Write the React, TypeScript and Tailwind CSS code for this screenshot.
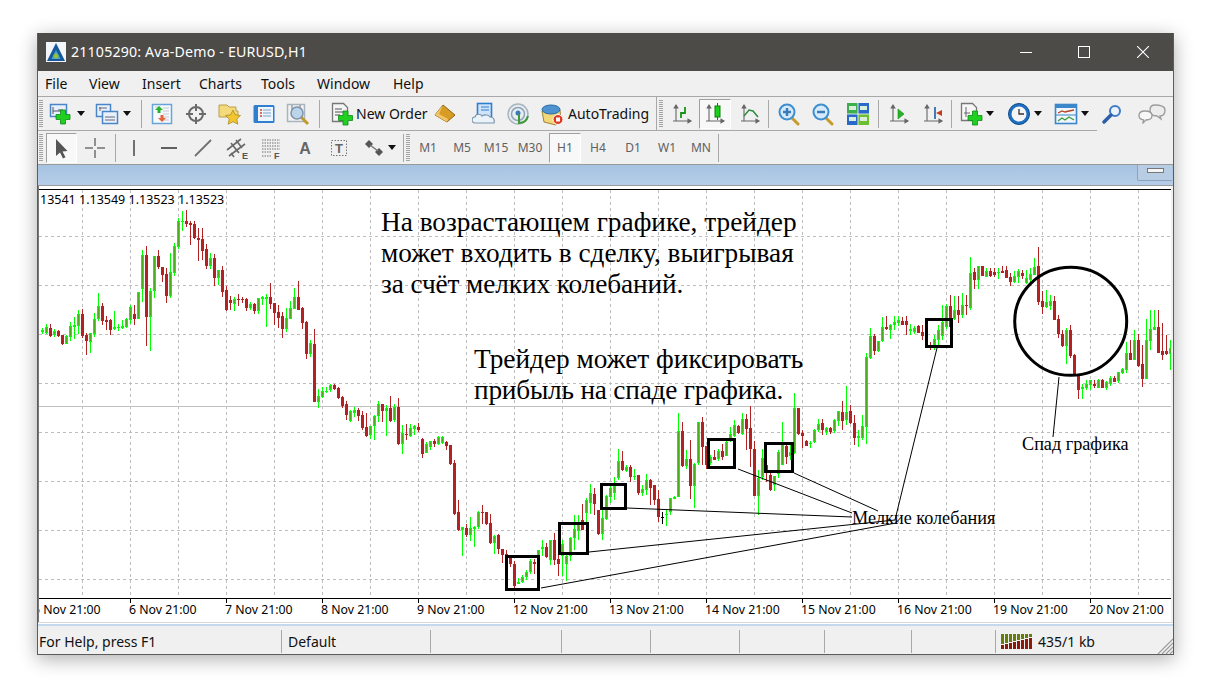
import type { ReactNode } from 'react';

type Candle = [number, number, number, number, number];

// colour (1 green, 0 red, 2 black), wick top, body top, body bottom, wick bottom, at 3x
const seg1: Candle[] = [
  [1,415,420,426,432],[1,402,411,429,432],[0,402,414,438,441],[1,417,423,435,441],[0,420,423,438,441],[0,435,435,462,465],[1,435,438,462,462],[1,396,408,441,453],[1,381,405,411,447],[1,360,372,408,432],
  [0,357,372,438,444],[0,429,435,453,495],[1,429,429,456,489],[1,369,387,432,441],[1,309,348,387,393],[0,339,348,393,405],[0,378,390,396,420],[0,387,390,420,435],[1,363,411,417,420],[1,402,411,414,423],
  [1,390,408,414,417],[1,384,387,411,414],[1,345,351,390,402],[0,345,372,387,405],[1,306,306,387,387],[1,180,195,297,336],[0,168,195,381,468],[1,294,303,381,483],[1,198,198,303,324],[0,180,198,231,237],
  [0,234,231,255,276],[0,234,252,318,339],[1,189,246,318,324],[1,159,168,249,258],[1,84,93,171,177],[1,63,93,95,123],[0,60,93,102,111],[0,93,99,105,165],[0,93,102,144,147],[0,114,144,150,213],
  [0,114,147,183,210],[0,162,177,228,237],[1,189,204,228,237],[0,192,204,264,288],[1,240,240,264,285],[0,228,240,306,321],[0,288,300,360,363],[0,318,330,339,360],[1,321,327,342,363],[0,312,327,330,348],
  [0,321,327,330,339],[0,324,327,354,363],[1,336,342,354,360],[0,339,342,363,372],[1,324,324,363,372],[1,318,321,327,345],[1,312,321,327,411],[0,279,321,342,357],[0,339,339,369,405],[0,345,366,384,414],
  [0,366,378,417,444],[1,354,384,417,426],[1,333,354,387,387],[1,294,321,357,357],[0,273,321,360,360],[0,351,354,399,417],[0,393,396,492,507],[1,450,459,492,501],[0,417,462,636,636],[1,597,618,636,654],
  [1,591,603,621,624],[1,591,603,606,609],[1,582,585,600,606],[0,582,585,597,600],[0,591,594,624,627],[0,618,621,648,654],[0,633,642,675,690],
];
const seg2: Candle[] = [
  [1,45,48,78,80],[1,37,45,55,65],[0,40,45,63,78],[0,48,60,99,105],[0,54,96,122,125],[1,93,93,120,132],[1,60,63,93,135],[1,18,27,63,80],[0,27,27,48,80],[1,30,39,48,123],[0,3,39,78,80],[1,27,36,75,80],[0,9,36,147,150],
];
const seg3: Candle[] = [
  [1,75,99,132,162],[0,72,102,105,120],[1,72,84,108,111],[1,75,78,87,105],[0,69,81,90,96],[0,114,117,162,174],[1,126,132,159,159],[1,123,123,141,150],[0,117,123,132,141],[1,108,111,132,135],
  [1,108,111,129,132],[0,123,126,138,150],[0,135,135,192,195],[0,180,189,342,345],[0,300,336,390,393],[1,381,381,390,468],[0,372,384,405,411],[1,351,384,405,423],[1,378,381,387,441],[1,333,336,381,387],
  [0,315,336,339,372],[0,336,336,372,375],[0,342,369,429,432],[1,405,408,429,462],[0,402,405,447,462],[0,447,447,465,489],[0,450,462,465,474],[0,465,468,492,500],[0,483,492,558,565],[1,534,546,552,552],
  [1,525,531,546,549],[1,510,516,531,540],[1,477,483,516,522],[0,477,486,492,522],[1,450,450,468,490],[1,420,441,447,468],[0,430,441,471,474],[1,420,420,480,495],[0,399,420,480,495],[0,465,477,492,528],
  [1,420,432,468,528],[1,465,468,492,543],[1,411,414,468,483],[1,345,387,414,450],[1,345,369,393,420],[0,312,360,390,366],[1,294,300,340,366],[1,252,279,309,342],[0,264,282,312,345],[0,330,330,402,405],
  [1,300,354,402,420],[1,285,288,357,360],[1,258,264,291,309],[1,232,258,279,300],[1,147,183,234,240],[0,153,183,210,213],[1,195,201,213,216],[0,195,201,231,246],[1,207,228,231,240],[0,225,225,279,285],
  [1,255,267,279,288],[1,222,240,270,285],[0,237,240,264,315],[0,255,255,300,315],[0,270,297,351,366],[2,336,351,353,372],[1,330,342,345,378],[1,294,294,336,345],[1,288,291,297,298],[1,39,93,291,291],
  [0,66,93,198,201],[1,150,177,198,207],[0,120,177,258,297],[1,189,192,258,324],[1,66,66,189,195],[0,51,66,141,195],[0,138,138,195,207],[1,165,171,189,195],[0,150,171,180,180],[1,147,153,177,183],
  [0,132,153,171,180],[1,120,126,168,168],[1,81,102,120,126],[1,60,75,108,110],[0,75,78,99,102],[1,39,57,102,105],[0,42,57,87,150],[0,18,84,147,201],[0,123,147,288,288],[1,210,234,288,345],
  [1,147,174,231,240],[0,180,195,210,245],[0,210,225,270,273],[1,228,228,255,273],[1,150,156,222,235],
];
const seg4: Candle[] = [
  [1,545,612,675,675],[0,606,618,651,672],[1,605,636,648,660],[1,460,504,640,642],[0,504,504,582,585],[0,570,579,588,624],[0,600,603,618,618],[1,603,609,612,624],[1,567,570,606,610],[1,537,552,570,576],
  [0,537,549,570,585],[1,561,564,576,585],[0,561,564,576,582],[1,537,540,573,578],[1,513,513,543,558],[0,483,516,543,570],[1,438,516,540,555],[0,495,513,549,552],[0,525,549,594,615],[1,570,588,594,622],
  [1,525,558,594,600],[1,340,351,560,612],[1,264,288,354,357],[0,282,288,333,345],[1,303,303,333,336],[1,231,261,303,306],[0,228,261,267,270],[1,252,255,270,297],[1,228,246,255,270],[1,228,240,249,258],
  [0,231,243,255,255],[0,228,243,255,285],[1,252,267,273,285],[1,258,264,276,282],[0,255,258,279,279],[0,255,276,288,300],[0,300,306,312,318],[0,306,318,324,330],[1,285,297,315,330],[1,255,270,300,315],
  [1,195,246,288,300],[1,192,198,261,267],[0,165,198,261,237],[1,168,210,237,240],[0,168,210,225,250],[1,159,195,225,234],[0,165,195,198,225],[1,51,99,204,210],[0,84,96,120,147],[1,78,78,120,147],
  [0,78,78,108,108],[1,84,93,111,111],[0,84,93,108,111],[0,84,96,105,111],[1,84,96,99,117],[0,78,93,99,96],[0,78,90,114,114],[0,100,111,126,138],[1,93,108,126,130],[1,87,93,111,130],
  [0,90,99,108,117],[1,90,114,129,133],[1,84,102,120,127],[1,54,81,105,105],[0,21,78,186,195],[0,153,183,201,222],[1,150,186,201,204],[1,165,183,198,210],[0,168,183,240,240],[0,225,237,282,294],
  [0,270,282,318,321],[1,264,270,318,372],[0,255,270,348,354],[0,342,345,408,408],[0,402,408,450,477],[1,432,441,447,477],[1,420,432,444,450],[1,420,420,435,450],[0,420,432,438,444],[1,417,420,444,445],
  [0,417,420,444,444],[1,423,426,444,450],[1,408,414,432,438],[0,408,414,426,426],[1,396,396,423,429],[1,384,387,399,402],[1,306,339,390,399],[0,300,339,360,360],[1,270,300,360,360],[0,282,300,378,380],
  [0,315,372,417,440],[1,237,300,417,417],[1,210,267,303,330],[1,210,261,270,270],[0,210,261,339,340],[0,250,333,345,360],[0,285,333,342,345],[1,300,324,342,390],
];

const candles = [
  ...seg1.map((c) => ({ c, base: 190 })),
  ...seg2.map((c) => ({ c, base: 395 })),
  ...seg3.map((c) => ({ c, base: 400 })),
  ...seg4.map((c) => ({ c, base: 240 })),
];

const hGrid = [236, 285, 334, 383, 432, 481, 530, 579];
const vGrid = Array.from({ length: 23 }, (_, i) => 82 + 48 * i);
const timeLabels = ['5 Nov 21:00', '6 Nov 21:00', '7 Nov 21:00', '8 Nov 21:00', '9 Nov 21:00', '12 Nov 21:00', '13 Nov 21:00', '14 Nov 21:00', '15 Nov 21:00', '16 Nov 21:00', '19 Nov 21:00', '20 Nov 21:00'];
const boxes = [
  [506.5, 556.5, 32, 33],
  [559.5, 523.5, 28, 30],
  [601.5, 484.5, 24, 24],
  [708.5, 439.5, 26, 28],
  [765.5, 443.5, 27, 28],
  [926.5, 319.5, 25, 27],
];
const thinLines = [
  [541, 588, 896, 523],
  [589, 552, 895, 520],
  [627, 508, 852, 517],
  [738, 469, 852, 513],
  [794, 473, 878, 511],
  [937, 348, 895, 520],
  [1059, 377, 1053, 437],
];

function Chart() {
  return (
    <svg width={1132} height={436} viewBox="39 186 1132 436" className="block bg-white" shapeRendering="crispEdges">
      <rect x={39} y={189} width={1132} height={1} fill="#000" />
      {hGrid.map((y) => (
        <line key={y} x1={39} x2={1171} y1={y + 0.5} y2={y + 0.5} stroke="#bdbdbd" strokeDasharray="3 3" />
      ))}
      {vGrid.map((x) => (
        <line key={x} x1={x + 0.5} x2={x + 0.5} y1={190} y2={598} stroke="#bdbdbd" strokeDasharray="3 3" />
      ))}
      <rect x={39} y={406} width={1132} height={1} fill="#c0c0c0" />
      {candles.map(({ c, base }, i) => {
        const x = 42 + 4 * i;
        const wt = base + Math.round(c[1] / 3);
        const bt = base + Math.round(c[2] / 3);
        const bb = base + Math.round(c[3] / 3);
        const wb = base + Math.round(c[4] / 3);
        const colour = c[0] === 1 ? '#00ff00' : c[0] === 0 ? '#b22222' : '#000';
        const h = Math.max(bb - bt, 1);
        return (
          <g key={i}>
            <rect x={x} y={Math.min(wt, bt)} width={1} height={Math.max(wb, bb) - Math.min(wt, bt)} fill={colour} />
            <rect x={x - 1} y={bt} width={3} height={h} fill={colour} />
            {c[0] === 1 && h > 2 && <rect x={x} y={bt + 1} width={1} height={h - 2} fill="#4aad1c" />}
          </g>
        );
      })}
      <rect x={39} y={598} width={1132} height={1} fill="#000" />
      <rect x={39} y={599} width={1132} height={23} fill="#fff" />
      {timeLabels.map((t, i) => (
        <g key={t}>
          {i > 0 && <rect x={130 + 96 * (i - 1)} y={599} width={1} height={4} fill="#000" />}
          <text x={33 + 96 * i} y={614} fontSize={12.3} fill="#000" fontFamily="'Noto Sans', sans-serif" shapeRendering="auto">{t}</text>
        </g>
      ))}
      {boxes.map(([x, y, w, h]) => (
        <rect key={x} x={x} y={y} width={w} height={h} fill="none" stroke="#000" strokeWidth={3} />
      ))}
      <g shapeRendering="auto">
        {thinLines.map(([a, b, c, d]) => (
          <line key={a + b} x1={a} y1={b} x2={c} y2={d} stroke="#000" strokeWidth={1} />
        ))}
        <ellipse cx={1070.7} cy={321.3} rx={56} ry={54} fill="none" stroke="#000" strokeWidth={3} />
      </g>
    </svg>
  );
}

function Ico({ children }: { children: ReactNode }) {
  return <svg width={24} height={24} viewBox="0 0 24 24" fill="none">{children}</svg>;
}

const GreenPlus = ({ x, y }: { x: number; y: number }) => (
  <path
    transform={`translate(${x} ${y})`}
    d="M-2.5-7h5v4.5H7v5H2.500V7h-5V2.500H-7v-5h4.500z"
    fill="#20d020"
    stroke="#0e8a1a"
    strokeWidth={0.8}
  />
);

const Axes = () => (
  <path d="M6 4v15M3 19h17M6 3l-1.800 3h3.600zM21 19l-3-1.800v3.600z" stroke="#666" strokeWidth={1.100} fill="#666" />
);

const Arrow = () => (
  <svg width={8} height={5} viewBox="0 0 8 5"><path d="M0 0h8L4 5z" fill="#111" /></svg>
);

const Glass = ({ sign }: { sign: 'plus' | 'minus' }) => (
  <Ico>
    <path d="M14 15l7 7" stroke="#c79a2a" strokeWidth={3} strokeLinecap="round" />
    <circle cx={10} cy={10} r={7.500} fill="#d6eafa" stroke="#3f8ecf" strokeWidth={2} />
    <path d="M6 10h8" stroke="#3a7cb8" strokeWidth={2.500} />
    {sign === 'plus' && <path d="M10 6v8" stroke="#3a7cb8" strokeWidth={2.500} />}
  </Ico>
);

const icons: Record<string, ReactNode> = {
  newChart: (
    <Ico>
      <rect x={1.500} y={2.500} width={16} height={12} fill="#e8f1fb" stroke="#4a86c5" strokeWidth={1.500} />
      <path d="M4 5v7M4 9h8M9 8h5" stroke="#556" />
      <GreenPlus x={14} y={15} />
    </Ico>
  ),
  profiles: (
    <Ico>
      <rect x={1.500} y={2.500} width={14} height={12} fill="#e8f1fb" stroke="#4a86c5" strokeWidth={1.500} />
      <rect x={7.500} y={9.500} width={15} height={12} fill="#e8f1fb" stroke="#4a86c5" strokeWidth={1.500} />
      <path d="M4 6h8M5 5v4M10 15h10M10 18h10" stroke="#667" />
    </Ico>
  ),
  market: (
    <Ico>
      <rect x={2.500} y={2.500} width={19} height={19} fill="#f7fafd" stroke="#6aa3d8" strokeWidth={1.500} />
      <path d="M5 5h5M13 6h6M13 9h6M13 12h6M13 15h6M13 18h6" stroke="#c0c8d0" />
      <path d="M9 4l4 4h-2.500v3h-3V8H5z" fill="#25b52a" />
      <path d="M12 20l-4-4h2.500v-3h3v3H16z" fill="#e8633a" />
    </Ico>
  ),
  navigator: (
    <Ico>
      <circle cx={12} cy={12} r={7} fill="#f2f2f2" stroke="#6a6a6a" strokeWidth={2} />
      <path d="M12 2v7M12 15v7M2 12h7M15 12h7" stroke="#6a6a6a" strokeWidth={2} />
    </Ico>
  ),
  favourite: (
    <Ico>
      <path d="M1 3h8l2 2h7v4h2v6H1z" fill="#f4da7a" stroke="#b8a050" />
      <path d="M15 8l2.300 4.800 5.200.7-3.700 3.500 1 5.200-4.800-2.500-4.800 2.500 1-5.200-3.700-3.500 5.200-.7z" fill="#f3c52f" stroke="#a98a25" strokeWidth={0.8} />
    </Ico>
  ),
  terminal: (
    <Ico>
      <rect x={1.500} y={3} width={21} height={18} rx={1.500} fill="#2f7fd0" />
      <rect x={6} y={5} width={15} height={14} fill="#eef5fc" />
      <path d="M8 8h2M8 11h2M8 14h2" stroke="#d0402a" strokeWidth={1.500} />
      <path d="M11 8h8M11 11h8M11 14h8" stroke="#7aa3cc" />
    </Ico>
  ),
  tester: (
    <Ico>
      <rect x={1.500} y={2.500} width={17} height={17} fill="#f2f2f2" stroke="#a8b4c0" strokeWidth={1.500} />
      <path d="M6 3v8M14 3v8" stroke="#778" />
      <path d="M15 15l7 7" stroke="#c19a2c" strokeWidth={3} />
      <circle cx={11} cy={11} r={6} fill="#bcd4ea" stroke="#7d93a8" strokeWidth={1.500} />
    </Ico>
  ),
  order: (
    <Ico>
      <path d="M2.500 1.500h11l4 4v14h-15z" fill="#f4f4f4" stroke="#777" strokeWidth={1.300} />
      <path d="M5 7h7M5 10h9M5 13h5" stroke="#555" />
      <GreenPlus x={15.500} y={16} />
    </Ico>
  ),
  gold: (
    <Ico>
      <path d="M10 3l12 10-8 7-12-7z" fill="#d89c25" stroke="#8c6518" />
      <path d="M10 3L2 13l12 7 1-3-9-5z" fill="#f2c668" />
    </Ico>
  ),
  cloud: (
    <Ico>
      <rect x={5.500} y={1.500} width={14} height={14} fill="#cfe4f8" stroke="#2f7fd0" strokeWidth={1.600} />
      <path d="M9 5h8M9 8h8" stroke="#2f7fd0" />
      <path d="M3 21a3 3 0 0 1 0-6c1-4 6-3 7-1 3-2 7-1 8 1 3 0 5 2 4 6z" fill="#eaf2fa" stroke="#7b93ad" strokeWidth={1.200} />
    </Ico>
  ),
  radar: (
    <Ico>
      <circle cx={12} cy={12} r={10} fill="#e6edf3" stroke="#a8b4be" strokeWidth={1.500} />
      <circle cx={12} cy={12} r={6.500} stroke="#90a4b6" strokeWidth={1.500} />
      <circle cx={12} cy={11} r={2.500} fill="#3a78bf" />
      <path d="M13 12v9c5 0 8-3 9-7" stroke="#3d9a35" strokeWidth={2} />
    </Ico>
  ),
  auto: (
    <Ico>
      <path d="M2 9l18-1 1 10-5 5-12-3z" fill="#f2d879" stroke="#9c8236" />
      <ellipse cx={11} cy={7.500} rx={9} ry={4.500} fill="#4c93d0" stroke="#2b6aa3" />
      <circle cx={18} cy={17.500} r={5} fill="#e03a23" stroke="#fff" />
      <rect x={16} y={15.500} width={4} height={4} fill="#fff" />
    </Ico>
  ),
  barChart: (
    <Ico>
      <Axes />
      <path d="M11 16v-5h4V5" stroke="#169416" strokeWidth={1.800} />
    </Ico>
  ),
  candle: (
    <Ico>
      <Axes />
      <rect x={12} y={4} width={5} height={11} fill="#19d019" stroke="#0d7d0d" />
      <path d="M14.500 1v3M14.500 15v3" stroke="#0d7d0d" />
    </Ico>
  ),
  line: (
    <Ico>
      <Axes />
      <path d="M6 14l5-6 4 1 5 6" stroke="#2f8a3c" strokeWidth={1.500} />
    </Ico>
  ),
  zoomIn: <Glass sign="plus" />,
  zoomOut: <Glass sign="minus" />,
  tile: (
    <Ico>
      <rect x={1} y={1} width={11} height={11} fill="#3cae4b" />
      <rect x={12} y={1} width={11} height={11} fill="#2969c9" />
      <rect x={1} y={12} width={11} height={11} fill="#2969c9" />
      <rect x={12} y={12} width={11} height={11} fill="#6cbf2e" />
      <path d="M3 4h7v4H3zM14 4h7v4h-7zM3 15h7v4H3zM14 15h7v4h-7z" fill="#dbeedd" />
      <path d="M1 12h22M12 1v22" stroke="#fff" strokeWidth={0.8} />
    </Ico>
  ),
  shift: (
    <Ico>
      <Axes />
      <path d="M11 7l6 5-6 5z" fill="#25b52a" stroke="#148a1a" strokeWidth={0.6} />
    </Ico>
  ),
  autoscroll: (
    <Ico>
      <Axes />
      <path d="M14 5v12" stroke="#2c6fb0" strokeWidth={1.800} />
      <path d="M15 11l6-3v6z" fill="#c33a1c" />
    </Ico>
  ),
  indicators: (
    <Ico>
      <path d="M1.500 1.500h11l4 4v13h-15z" fill="#f7f7f7" stroke="#777" strokeWidth={1.300} />
      <path d="M6 5v10M4 11h6" stroke="#666" />
      <GreenPlus x={15} y={16} />
    </Ico>
  ),
  clock: (
    <Ico>
      <circle cx={12} cy={12} r={10.500} fill="#1d6fc4" stroke="#104c8c" />
      <circle cx={12} cy={12} r={7.500} fill="#f5f5f5" />
      <path d="M12 7v5h5" stroke="#333" strokeWidth={1.300} />
    </Ico>
  ),
  template: (
    <Ico>
      <rect x={1.500} y={2.500} width={21} height={19} fill="#f0f6fb" stroke="#3b87c9" strokeWidth={1.600} />
      <rect x={2} y={3} width={20} height={3} fill="#3b87c9" />
      <path d="M2 13h20" stroke="#3b87c9" />
      <path d="M4 11l4-2 3 1 4-1 5-1" stroke="#b8431f" strokeWidth={1.300} />
      <path d="M4 19l4-3 3 2 4-3 5 3" stroke="#3e9a38" strokeWidth={1.300} />
    </Ico>
  ),
  search: (
    <Ico>
      <circle cx={15} cy={9} r={5} fill="#eaf3fb" stroke="#3d7cc5" strokeWidth={2} />
      <path d="M11 13l-7 7" stroke="#2d5fa8" strokeWidth={3.500} strokeLinecap="round" />
    </Ico>
  ),
  cursor: (
    <Ico>
      <path d="M6 3v17l4-3.500 3 6 2.500-1.300-3-5.700 5-.5z" fill="#555" />
    </Ico>
  ),
  cross: (
    <Ico>
      <path d="M12 2v8M12 14v8M2 12h8M14 12h8" stroke="#707070" strokeWidth={1.500} />
    </Ico>
  ),
  vLine: <Ico><path d="M12 4v16" stroke="#707070" strokeWidth={2} /></Ico>,
  hLine: <Ico><path d="M4 12h16" stroke="#606060" strokeWidth={2} /></Ico>,
  trend: <Ico><path d="M4 20L20 4" stroke="#707070" strokeWidth={1.800} /></Ico>,
  channel: (
    <Ico>
      <path d="M2 14L16 3M4 20L20 8M6 17l3 4M10 12l4 5M6 7l7 9M11 4l6 8" stroke="#6a6a6a" strokeWidth={1.600} />
      <text x={17} y={23} fontSize={9} fontWeight={700} fill="#555" fontFamily="'Liberation Sans', sans-serif">E</text>
    </Ico>
  ),
  fibo: (
    <Ico>
      <path d="M3 4h18M3 7h18M3 10h18M3 13h18M3 16h10M3 20h10" stroke="#707070" strokeDasharray="1.500 1" />
      <text x={15} y={23} fontSize={9} fontWeight={700} fill="#555" fontFamily="'Liberation Sans', sans-serif">F</text>
    </Ico>
  ),
  letterA: (
    <Ico>
      <text x={12} y={18} textAnchor="middle" fontSize={16} fontWeight={700} fill="#666" fontFamily="'Liberation Sans', sans-serif">A</text>
    </Ico>
  ),
  letterT: (
    <Ico>
      <rect x={4.500} y={4.500} width={15} height={15} stroke="#777" strokeDasharray="1.500 1.500" />
      <text x={12} y={17} textAnchor="middle" fontSize={13} fontWeight={700} fill="#666" fontFamily="'Liberation Sans', sans-serif">T</text>
    </Ico>
  ),
  arrows: (
    <Ico>
      <path d="M3 8l4-4 4 4-4 4zM13 16l4-4 4 4-4 4z" fill="#555" />
      <path d="M8 9l8 6" stroke="#777" strokeWidth={1.500} />
    </Ico>
  ),
};

function Cell({ name, className }: { name: string; className: string }) {
  return <div className={`flex h-full shrink-0 items-center justify-center ${className}`}>{icons[name]}</div>;
}

function Drop({ className = '' }: { className?: string }) {
  return <div className={`flex h-full w-[8px] shrink-0 items-center justify-center ${className}`}><Arrow /></div>;
}

function Sep({ className = '' }: { className?: string }) {
  return <div className={`h-[28px] w-px shrink-0 bg-[#a8a8a8] ${className}`} />;
}

function Grip({ className }: { className: string }) {
  return <div className={`h-[27px] w-[4px] shrink-0 bg-[repeating-linear-gradient(180deg,#a4a4a4_0,#a4a4a4_1px,transparent_1px,transparent_2px)] ${className}`} />;
}

const pressed = 'border border-t-[#a0a0a0] border-l-[#a0a0a0] border-b-white border-r-white bg-[#f8f8f8]';

function Tf({ label, className = 'w-[34px]' }: { label: string; className?: string }) {
  return <div className={`flex shrink-0 items-center justify-center text-[12px] text-[#606060] ${className}`}>{label}</div>;
}

function ChatIcon() {
  return (
    <svg width={28} height={20} viewBox="0 0 28 20" fill="none">
      <path d="M17 1c5 0 10 1 10 5s-2 6-5 6l1 3-4-3c-4 0-7-2-7-6s2-5 5-5z" fill="#ececec" stroke="#9a9a9a" strokeWidth={1.300} />
      <path d="M7 7c4 0 7 1 7 4.500S11 16 8 16l-3 3 .5-3.200C3 15.500 1 14 1 11.500S3 7 7 7z" fill="#f7f7f7" stroke="#9a9a9a" strokeWidth={1.300} />
    </svg>
  );
}

function Logo() {
  return (
    <svg width={20} height={20} viewBox="0 0 20 20">
      <rect width={20} height={20} fill="#f2f6fa" />
      <path d="M10 1l9 18H1z" fill="#165a9c" />
      <path d="M10 8l4.500 9h-9z" fill="#4aa0d8" />
      <circle cx={10} cy={14} r={2.500} fill="#8fc23c" />
    </svg>
  );
}

function LoadBars() {
  const heights = [4, 5, 6, 7, 8, 9, 10, 11];
  return (
    <svg width={32} height={16} viewBox="0 0 32 16" shapeRendering="crispEdges">
      {heights.map((h, i) => (
        <g key={i}>
          <rect x={i * 4} y={0} width={3} height={15 - h - 1} fill="#667d0e" />
          <rect x={i * 4} y={15 - h} width={3} height={h} fill="#8b1a0a" />
        </g>
      ))}
    </svg>
  );
}

const statusCell = 'flex h-[23px] shrink-0 items-center border-r border-[#a8a8a8]';

export default function App() {
  return (
    <div className="min-h-screen bg-white pl-[37px] pt-[33px] font-['Noto_Sans',sans-serif] text-[#111]">
      <div className="flex h-[622px] w-[1137px] flex-col border-x border-b border-x-[#5c5c5c] border-b-[#5c5c5c] bg-[#f0f0f0] shadow-[0_4px_18px_rgba(0,0,0,0.32)]">
        {/* title bar */}
        <div className="flex h-[38px] shrink-0 items-center bg-[#4d4b48] text-white">
          <div className="ml-[8px]"><Logo /></div>
          <span className="ml-[5px] text-[14.2px] tracking-[0.17px]">21105290: Ava-Demo - EURUSD,H1</span>
          <div className="ml-auto flex items-center" >
            <svg width={12} height={12} viewBox="0 0 12 12" className="mr-[46px]" shapeRendering="crispEdges"><path d="M0 6.500h12" stroke="#fff" /></svg>
            <svg width={12} height={12} viewBox="0 0 12 12" className="mr-[47px]" shapeRendering="crispEdges"><rect x={0.5} y={0.5} width={11} height={11} stroke="#fff" fill="none" /></svg>
            <svg width={12} height={12} viewBox="0 0 12 12" className="mr-[24px]"><path d="M0 0l12 12M12 0L0 12" stroke="#fff" strokeWidth={1.100} /></svg>
          </div>
        </div>

        {/* menu */}
        <div className="flex h-[25px] shrink-0 items-center pl-[7px] text-[14px]">
          <span className="w-[44px]">File</span>
          <span className="w-[53px]">View</span>
          <span className="w-[57px]">Insert</span>
          <span className="w-[62px]">Charts</span>
          <span className="w-[56px]">Tools</span>
          <span className="w-[76px]">Window</span>
          <span>Help</span>
        </div>
        <div className="h-px shrink-0 bg-[#a8a8a8]" />

        {/* main toolbar */}
        <div className="flex h-[33px] shrink-0 items-center">
          <Grip className="ml-[1px]" />
          <Cell name="newChart" className="ml-px w-[34px]" />
          <Drop className="-ml-px" />
          <Cell name="profiles" className="ml-[5px] w-[34px]" />
          <Drop className="-ml-px" />
          <Sep className="ml-[10px]" />
          <Cell name="market" className="ml-[3px] w-[34px]" />
          <Cell name="navigator" className="w-[34px]" />
          <Cell name="favourite" className="w-[34px]" />
          <Cell name="terminal" className="w-[34px]" />
          <Cell name="tester" className="w-[34px]" />
          <Sep className="ml-[4px]" />
          <Cell name="order" className="ml-[9px] w-[26px]" />
          <span className="ml-[1px] w-[72px] text-[14px] whitespace-nowrap">New Order</span>
          <Cell name="gold" className="w-[34px]" />
          <Cell name="cloud" className="ml-[5px] w-[34px]" />
          <Cell name="radar" className="w-[34px]" />
          <Cell name="auto" className="w-[33px]" />
          <span className="w-[83px] text-[14px] whitespace-nowrap">AutoTrading</span>
          <div className="ml-[5px] h-full w-px shrink-0 bg-[#a8a8a8]" />
          <Grip className="ml-[2px]" />
          <Cell name="barChart" className="ml-[2px] w-[34px]" />
          <div className={`flex h-[30px] w-[32px] shrink-0 items-center justify-center ${pressed}`}>{icons.candle}</div>
          <Cell name="line" className="ml-[2px] w-[34px]" />
          <Sep className="ml-px" />
          <Cell name="zoomIn" className="ml-[3px] w-[34px]" />
          <Cell name="zoomOut" className="w-[34px]" />
          <Cell name="tile" className="ml-px w-[34px]" />
          <Sep className="ml-[3px]" />
          <Cell name="shift" className="ml-[3px] w-[34px]" />
          <Cell name="autoscroll" className="w-[34px]" />
          <Sep className="ml-px" />
          <Cell name="indicators" className="ml-[5px] w-[30px]" />
          <Drop className="-ml-px" />
          <Cell name="clock" className="ml-[10px] w-[30px]" />
          <Drop />
          <Cell name="template" className="ml-[9px] w-[30px]" />
          <Drop />
          <Cell name="search" className="ml-[6px] w-[34px]" />
          <div className="ml-[9px] flex items-center"><ChatIcon /></div>
        </div>
        <div className="h-px w-[1059px] shrink-0 bg-[#a8a8a8]" />

        {/* drawing toolbar */}
        <div className="flex h-[33px] shrink-0 items-center">
          <Grip className="ml-[1px]" />
          <div className={`ml-[3px] flex h-[30px] w-[31px] shrink-0 items-center justify-center ${pressed}`}>{icons.cursor}</div>
          <Cell name="cross" className="ml-px w-[34px]" />
          <Sep className="ml-[3px]" />
          <Cell name="vLine" className="ml-px w-[34px]" />
          <Cell name="hLine" className="ml-px w-[34px]" />
          <Cell name="trend" className="w-[34px]" />
          <Cell name="channel" className="w-[34px]" />
          <Cell name="fibo" className="w-[34px]" />
          <Cell name="letterA" className="w-[34px]" />
          <Cell name="letterT" className="w-[34px]" />
          <Cell name="arrows" className="ml-px w-[34px]" />
          <Drop className="-ml-[3px]" />
          <Sep className="ml-[7px]" />
          <Grip className="ml-[2px]" />
          <Tf label="M1" className="ml-px w-[34px]" />
          <Tf label="M5" />
          <Tf label="M15" />
          <Tf label="M30" />
          <div className={`ml-[2px] flex h-[30px] w-[32px] shrink-0 items-center justify-center text-[12px] text-[#606060] ${pressed}`}>H1</div>
          <Tf label="H4" />
          <Tf label="D1" className="ml-px w-[34px]" />
          <Tf label="W1" />
          <Tf label="MN" />
          <Sep />
        </div>

        {/* document tab band */}
        <div className="relative h-[22px] shrink-0 border-y border-[#9a9a9a] bg-[linear-gradient(180deg,#a6c3e2,#b6cee8)]">
          <div className="absolute right-[1px] top-0 flex h-[16px] w-[35px] justify-center rounded-bl-[2px] border-b border-l border-[#8ea4bc] bg-[#b8cde4] pt-[3px]">
            <div className="h-[5px] w-[17px] border border-[#777] bg-[#f4f4f4]" />
          </div>
        </div>

        {/* chart */}
        <div className="relative flex h-[436px] shrink-0 border-l border-[#777] pr-[2px]">
          <Chart />
          <div className="absolute left-px top-[6px] text-[12.5px] leading-[16px] whitespace-nowrap text-black">13541 1.13549 1.13523 1.13523</div>
          <div className="absolute left-[342px] top-[21px] font-['Liberation_Serif',serif] text-[27.3px] leading-[31px] whitespace-nowrap text-black">
            На возрастающем графике, трейдер<br />
            может входить в сделку, выигрывая<br />
            <span className="tracking-[-0.1px]">за счёт мелких колебаний.</span>
          </div>
          <div className="absolute left-[435px] top-[158px] font-['Liberation_Serif',serif] text-[27.3px] leading-[31px] whitespace-nowrap text-black">
            Трейдер может фиксировать<br />
            <span className="tracking-[-0.2px]">прибыль на спаде графика.</span>
          </div>
          <div className="absolute left-[813px] top-[322px] font-['Liberation_Serif',serif] text-[18.2px] leading-[20px] whitespace-nowrap text-black">Мелкие колебания</div>
          <div className="absolute left-[983px] top-[248px] font-['Liberation_Serif',serif] text-[18.2px] leading-[20px] whitespace-nowrap text-black">Спад графика</div>
        </div>
        <div className="h-[4px] shrink-0 border-t border-b-2 border-t-[#d8d8d8] border-b-[#c4d9f0] bg-white" />

        {/* status bar */}
        <div className="relative flex h-[28px] shrink-0 items-center pt-[3px] text-[14px]">
          <div className={`w-[244px] pl-px ${statusCell}`}>For Help, press F1</div>
          <div className={`w-[149px] pl-[6px] ${statusCell}`}>Default</div>
          <div className={`w-[131px] ${statusCell}`} />
          <div className={`w-[89px] ${statusCell}`} />
          <div className={`w-[89px] ${statusCell}`} />
          <div className={`w-[85px] ${statusCell}`} />
          <div className={`w-[87px] ${statusCell}`} />
          <div className={`w-[84px] ${statusCell}`} />
          <div className="ml-[5px] flex items-center">
            <LoadBars />
            <span className="ml-[5px]">435/1 kb</span>
          </div>
          <svg width={16} height={16} viewBox="0 0 16 16" className="absolute bottom-0 right-0" shapeRendering="auto">
            <path d="M16 1L1 16M16 5L5 16M16 9L9 16M16 13L13 16" stroke="#9a9a9a" strokeWidth={1.200} />
          </svg>
        </div>
      </div>
    </div>
  );
}
